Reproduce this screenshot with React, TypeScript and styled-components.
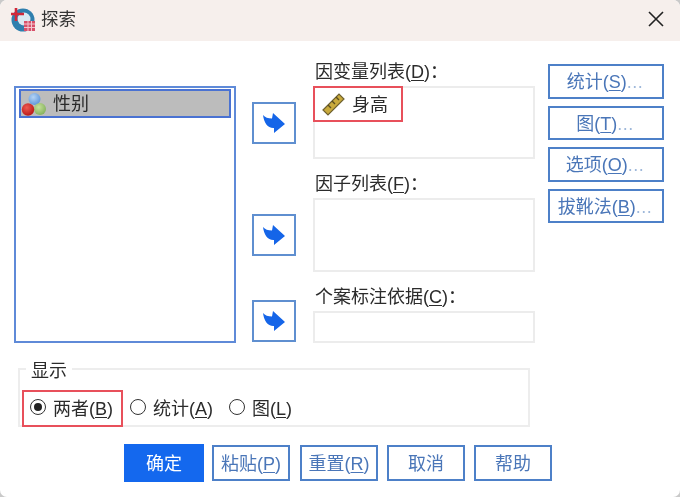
import React from "react";
import styled, { createGlobalStyle } from "styled-components";

const Global = createGlobalStyle`
  html, body { margin: 0; padding: 0; background: #c9c9c9; }
  body { font-family: "Liberation Sans", "Noto Sans CJK SC", sans-serif; }
`;
const Window = styled.div`
  width: 680px; height: 497px; background: #fff; overflow: hidden;
  border-radius: 7px; color: #2b2b2b; font-size: 18px; filter: blur(0.45px);
`;
const TitleBar = styled.div`
  height: 41px; background: #f6efec; display: flex; align-items: center;
  padding: 0 15px 4px 10px; gap: 5px; box-sizing: border-box;
`;
const TitleText = styled.span` flex: 1; color: #333; line-height: 1; font-size: 17.5px; padding-top: 2px; `;
const Main = styled.div` display: flex; padding: 19px 0 0 14px; height: 302px; box-sizing: border-box; `;
const VarList = styled.div`
  width: 222px; height: 257px; margin-top: 26px; box-sizing: border-box; flex: none;
  border: 2px solid #5f8ad8; padding: 1px 3px;
`;
const SelectedRow = styled.div`
  height: 29px; background: #bcbcbc; border: 2px solid #4a72d2; box-sizing: border-box;
  display: flex; align-items: center; padding-left: 0; gap: 6px; font-size: 18px;
  & > span { padding-bottom: 3px; }
`;
const ArrowColumn = styled.div` width: 77px; flex: none; padding-left: 16px; box-sizing: border-box; display: flex; flex-direction: column; `;
const ArrowButton = styled.div<{ $top: number }>`
  width: 44px; height: 42px; flex: none; margin-top: ${p => p.$top}px; box-sizing: border-box;
  border: 2px solid #5f8fd0; display: flex; align-items: center; justify-content: center;
`;
const Fields = styled.div` width: 222px; flex: none; display: flex; flex-direction: column; gap: 13px; `;
const Field = styled.div` display: flex; flex-direction: column; gap: 4px; `;
const FieldLabel = styled.div` height: 22px; line-height: 24px; padding-left: 2px; white-space: nowrap; `;
const FieldBox = styled.div<{ $h: number }>`
  height: ${p => p.$h}px; box-sizing: border-box; border: 2px solid #ececec; background: #fff;
`;
const Highlighted = styled.div`
  width: 90px; height: 36px; margin: -2px; box-sizing: border-box; border: 2px solid #e8505b;
  display: flex; align-items: center; padding-left: 7px; gap: 7px;
  & > span { padding-bottom: 2px; }
`;
const SideButtons = styled.div` margin-left: 13px; padding-top: 4px; width: 116px; display: flex; flex-direction: column; gap: 7px; `;
const SideButton = styled.div`
  height: 34.5px; box-sizing: border-box; border: 2px solid #4d80c8; color: #4a76b8; padding: 0 2px 2px 0;
  display: flex; align-items: center; justify-content: center; white-space: nowrap;
`;
const Dots = styled.span` color: #9fb8da; letter-spacing: 0.5px; `;
const Group = styled.div`
  position: relative; margin: 25px 0 0 18px; width: 512px; height: 59px; box-sizing: border-box;
  border: 2px solid #ededed; display: flex; align-items: flex-start; padding: 20px 0 0 2px;
`;
const Legend = styled.span`
  position: absolute; left: 6px; top: -11px; padding: 0 5px; background: #fff; line-height: 24px;
`;
const RadioItem = styled.div<{ $on?: boolean; $w: number }>`
  display: flex; align-items: center; gap: 7px; box-sizing: border-box; height: 37px; width: ${p => p.$w}px;
  padding: 0 0 4px ${p => (p.$on ? 6 : 5)}px; white-space: nowrap;
  border: ${p => (p.$on ? "2px solid #e8505b" : "2px solid transparent")};
`;
const Circle = styled.span<{ $on?: boolean }>`
  width: 16px; height: 16px; box-sizing: border-box; border: 1.5px solid #333; border-radius: 50%; flex: none;
  display: flex; align-items: center; justify-content: center;
  &::after { content: ""; width: 8px; height: 8px; border-radius: 50%; background: ${p => (p.$on ? "#222" : "transparent")}; }
`;
const Footer = styled.div` display: flex; padding-left: 124px; margin-top: 17px; align-items: center; `;
const FooterButton = styled.div<{ $primary?: boolean; $w: number; $gap: number }>`
  width: ${p => p.$w}px; height: ${p => (p.$primary ? 38 : 36)}px; margin-right: ${p => p.$gap}px; padding-bottom: 2px;
  box-sizing: border-box; display: flex; align-items: center; justify-content: center; white-space: nowrap;
  background: ${p => (p.$primary ? "#1468ee" : "#fff")};
  color: ${p => (p.$primary ? "#fff" : "#4a76b8")};
  border: ${p => (p.$primary ? "none" : "2px solid #4d80c8")};
`;
const Key = styled.span` text-decoration: underline; text-underline-offset: 2px; `;

const Arrow = () => (
  <svg width="24" height="22" viewBox="0 0 24 22">
    <path d="M1 3 C3 5.5 6 6.5 10 6.5 L11 1 L23 12 L12 21 L12 16 C6 16.5 2 11 1 3Z" fill="#1565e8" />
  </svg>
);
const Balls = () => (
  <svg width="26" height="26" viewBox="0 0 26 26">
    <defs>
      <radialGradient id="bb" cx="40%" cy="35%" r="70%"><stop offset="0%" stopColor="#b5d4f5" /><stop offset="100%" stopColor="#5c95da" /></radialGradient>
      <radialGradient id="bg" cx="40%" cy="35%" r="70%"><stop offset="0%" stopColor="#c6e09a" /><stop offset="100%" stopColor="#82b05a" /></radialGradient>
      <radialGradient id="br" cx="40%" cy="35%" r="70%"><stop offset="0%" stopColor="#ee5a50" /><stop offset="100%" stopColor="#b81515" /></radialGradient>
    </defs>
    <circle cx="13.5" cy="8" r="6" fill="url(#bb)" />
    <circle cx="19" cy="18" r="6" fill="url(#bg)" />
    <circle cx="7" cy="18.5" r="6.2" fill="url(#br)" />
  </svg>
);
const Ruler = () => (
  <svg width="23" height="23" viewBox="0 0 23 23">
    <path d="M1 17 L17 1 L22 6 L6 22Z" fill="#c9aa3c" stroke="#6f6130" strokeWidth="1.2" />
    <path d="M6 12 l3 3 M10 8 l3 3 M14 4 l3 3" stroke="#5a4d20" strokeWidth="1.4" />
  </svg>
);
const AppIcon = () => (
  <svg width="26" height="26" viewBox="0 0 26 26">
    <circle cx="13" cy="14" r="11.5" fill="#2f7fae" />
    <circle cx="14" cy="13" r="6.5" fill="#dbe9f2" />
    <path d="M1 8 h13 M6 2 v13" stroke="#d0283a" strokeWidth="2.6" />
    <rect x="14" y="15" width="11" height="10" fill="#d8506a" />
    <path d="M14 18 h11 M14 21.5 h11 M18 15 v10 M21.5 15 v10" stroke="#f2c6cf" strokeWidth="1" />
  </svg>
);
const CloseIcon = () => (
  <svg width="18" height="18" viewBox="0 0 18 18">
    <path d="M2 2 L16 16 M16 2 L2 16" stroke="#222" strokeWidth="1.6" />
  </svg>
);

export default function App() {
  return (
    <>
      <Global />
      <Window>
        <TitleBar>
          <AppIcon />
          <TitleText>探索</TitleText>
          <CloseIcon />
        </TitleBar>
        <Main>
          <VarList>
            <SelectedRow><Balls /><span>性别</span></SelectedRow>
          </VarList>
          <ArrowColumn>
            <ArrowButton $top={42}><Arrow /></ArrowButton>
            <ArrowButton $top={70}><Arrow /></ArrowButton>
            <ArrowButton $top={44}><Arrow /></ArrowButton>
          </ArrowColumn>
          <Fields>
            <Field>
              <FieldLabel>因变量列表(<Key>D</Key>)：</FieldLabel>
              <FieldBox $h={73}>
                <Highlighted><Ruler /><span>身高</span></Highlighted>
              </FieldBox>
            </Field>
            <Field>
              <FieldLabel>因子列表(<Key>F</Key>)：</FieldLabel>
              <FieldBox $h={74} />
            </Field>
            <Field>
              <FieldLabel>个案标注依据(<Key>C</Key>)：</FieldLabel>
              <FieldBox $h={32} />
            </Field>
          </Fields>
          <SideButtons>
            <SideButton><span>统计(<Key>S</Key>)<Dots>...</Dots></span></SideButton>
            <SideButton><span>图(<Key>T</Key>)<Dots>...</Dots></span></SideButton>
            <SideButton><span>选项(<Key>O</Key>)<Dots>...</Dots></span></SideButton>
            <SideButton><span>拔靴法(<Key>B</Key>)<Dots>...</Dots></span></SideButton>
          </SideButtons>
        </Main>
        <Group>
          <Legend>显示</Legend>
          <RadioItem $on $w={101}><Circle $on /><span>两者(<Key>B</Key>)</span></RadioItem>
          <RadioItem $w={99}><Circle /><span>统计(<Key>A</Key>)</span></RadioItem>
          <RadioItem $w={90}><Circle /><span>图(<Key>L</Key>)</span></RadioItem>
        </Group>
        <Footer>
          <FooterButton $primary $w={80} $gap={8}>确定</FooterButton>
          <FooterButton $w={78} $gap={10}><span>粘贴(<Key>P</Key>)</span></FooterButton>
          <FooterButton $w={78} $gap={9}><span>重置(<Key>R</Key>)</span></FooterButton>
          <FooterButton $w={78} $gap={9}>取消</FooterButton>
          <FooterButton $w={78} $gap={0}>帮助</FooterButton>
        </Footer>
      </Window>
    </>
  );
}
